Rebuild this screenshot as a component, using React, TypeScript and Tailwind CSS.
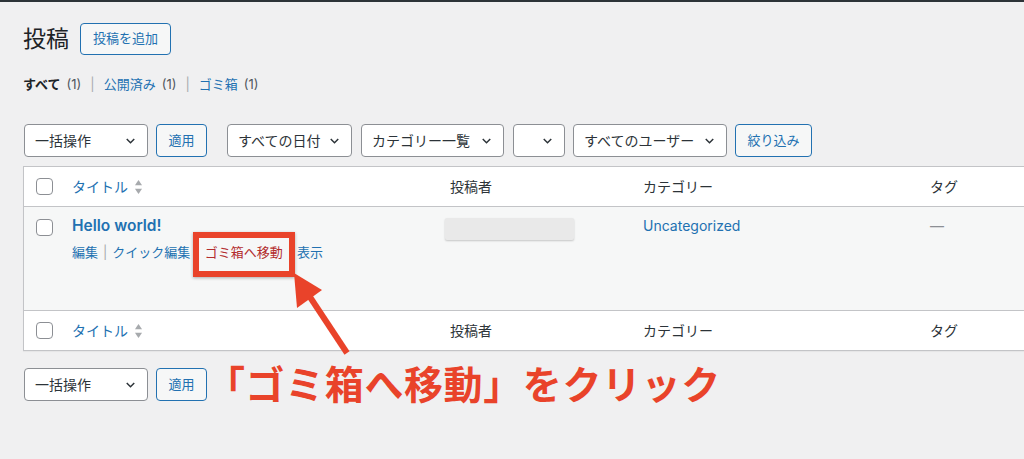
import React from 'react';

// --- small building blocks ---
const Chevron = () => (
  <svg viewBox="0 0 20 20" className="w-[15px] h-[15px] shrink-0" fill="none" stroke="#2c3338" strokeWidth={2}>
    <path d="M5 8l5 5 5-5" />
  </svg>
);

const Select = ({ label, w }: { label: string; w: string }) => (
  <div className={`${w} h-[33px] bg-white border border-[#8c8f94] rounded-[4px] flex items-center justify-between pl-[10px] pr-[9px] text-[14px] text-[#2c3338]`}>
    <span>{label}</span>
    <Chevron />
  </div>
);

const SecondaryButton = ({ label, w }: { label: string; w: string }) => (
  <div className={`${w} h-[33px] bg-[#f6f7f7] border border-[#2271b1] rounded-[4px] flex items-center justify-center text-[13px] text-[#2271b1]`}>
    {label}
  </div>
);

const Checkbox = () => (
  <div className="w-[17px] h-[17px] bg-white border border-[#8c8f94] rounded-[4px]" />
);

const SortArrows = () => (
  <svg viewBox="0 0 10 18" className="w-[9px] h-[16px] ml-[6px]" fill="#a7aaad">
    <path d="M5 1l4 6H1z" />
    <path d="M5 17l4-6H1z" />
  </svg>
);

// header / footer row of the posts table
const HeadRow = ({ border }: { border: 'top' | 'bottom' }) => (
  <div
    className={`grid grid-cols-[38px_378px_193px_287px_1fr] h-[40px] items-center text-[14px] text-[#2c3338] ${
      border === 'bottom' ? 'border-b border-[#c3c4c7]' : 'border-t border-[#c3c4c7]'
    }`}
  >
    <div className="pl-[12px]"><Checkbox /></div>
    <div className="pl-[10px] flex items-center text-[#2271b1]">
      タイトル
      <SortArrows />
    </div>
    <div className="pl-[10px]">投稿者</div>
    <div className="pl-[10px]">カテゴリー</div>
    <div className="pl-[10px]">タグ</div>
  </div>
);

const Sep = ({ gap = 'mx-[5px]' }: { gap?: string }) => <span className={`text-[#a7aaad] ${gap}`}>|</span>;

export default function App() {
  return (
    <div className="relative w-[1024px] h-[459px] overflow-hidden bg-[#f0f0f1] font-[Inter,'Noto_Sans_CJK_JP',sans-serif] text-[#2c3338]">
      {/* admin bar edge */}
      <div className="h-[2px] bg-[#2c3338]" />

      <div className="pl-[23px]">
        {/* page heading */}
        <div className="flex items-center gap-[11px] pt-[21px]">
          <h1 className="text-[23px] leading-none text-[#1d2327]">投稿</h1>
          <div className="h-[32px] px-[12px] flex items-center bg-[#f6f7f7] border border-[#2271b1] rounded-[4px] text-[13px] text-[#2271b1]">
            投稿を追加
          </div>
        </div>

        {/* status links */}
        <div className="mt-[21px] h-[18px] flex items-center text-[13px] text-[#50575e]">
          <span className="font-bold text-[#1d2327]">すべて</span>
          <span className="ml-[6px]">(1)</span>
          <Sep gap="mx-[9px]" />
          <span className="text-[#2271b1]">公開済み</span>
          <span className="ml-[6px]">(1)</span>
          <Sep gap="mx-[9px]" />
          <span className="text-[#2271b1]">ゴミ箱</span>
          <span className="ml-[6px]">(1)</span>
        </div>

        {/* filters */}
        <div className="mt-[30px] flex items-center pl-px">
          <Select label="一括操作" w="w-[124px]" />
          <div className="ml-[8px]"><SecondaryButton label="適用" w="w-[51px]" /></div>
          <div className="ml-[20px]"><Select label="すべての日付" w="w-[125px]" /></div>
          <div className="ml-[9px]"><Select label="カテゴリー一覧" w="w-[143px]" /></div>
          <div className="ml-[9px]"><Select label="" w="w-[52px]" /></div>
          <div className="ml-[8px]"><Select label="すべてのユーザー" w="w-[154px]" /></div>
          <div className="ml-[8px]"><SecondaryButton label="絞り込み" w="w-[77px]" /></div>
        </div>

        {/* posts table */}
        <div className="mt-[9px] w-[1020px] bg-white border border-[#c3c4c7] shadow-[0_1px_1px_rgba(0,0,0,0.04)]">
          <HeadRow border="bottom" />
          <div className="grid grid-cols-[38px_378px_193px_287px_1fr] h-[103px] bg-[#f6f7f7] items-start text-[14px]">
            <div className="pl-[12px] pt-[12px]"><Checkbox /></div>
            <div className="pl-[10px] pt-[9px]">
              <div className="text-[15.5px] font-semibold text-[#2271b1] leading-[20px]">Hello world!</div>
              <div className="mt-[7px] flex items-center text-[13px] text-[#2271b1] leading-[18px]">
                <span>編集</span>
                <Sep />
                <span>クイック編集</span>
                <Sep />
                <span className="text-[#b32d2e]">ゴミ箱へ移動</span>
                <Sep />
                <span>表示</span>
              </div>
            </div>
            <div className="pl-[5px] pt-[11px]">
              <div className="w-[129px] h-[22px] bg-[#e9e9e9] rounded-[2px] shadow-[0_1px_2px_rgba(0,0,0,0.2)]" />
            </div>
            <div className="pl-[10px] pt-[8px] text-[#2271b1]">Uncategorized</div>
            <div className="pl-[10px] pt-[8px] text-[#8c8f94]">—</div>
          </div>
          <HeadRow border="top" />
        </div>

        {/* bottom bulk actions + annotation caption */}
        <div className="mt-[14px] flex items-center pl-px">
          <Select label="一括操作" w="w-[124px]" />
          <div className="ml-[8px]"><SecondaryButton label="適用" w="w-[51px]" /></div>
          <div className="-ml-[1px] text-[39px] font-bold leading-none text-[#e9432a] tracking-[0.6px]">
            「ゴミ箱へ移動」をクリック
          </div>
        </div>
      </div>

      {/* annotation: highlight box */}
      <div className="absolute left-[193px] top-[232px] w-[102px] h-[45px] border-[6px] border-[#e9432a] shadow-[0_1px_3px_rgba(0,0,0,0.3)]" />

      {/* annotation: arrow */}
      <svg className="absolute left-0 top-0 w-[1024px] h-[459px] pointer-events-none" viewBox="0 0 1024 459">
        <line x1="347" y1="353" x2="306" y2="291" stroke="#e9432a" strokeWidth="6" />
        <polygon points="294,273 322,290 297,308" fill="#e9432a" />
      </svg>
    </div>
  );
}
